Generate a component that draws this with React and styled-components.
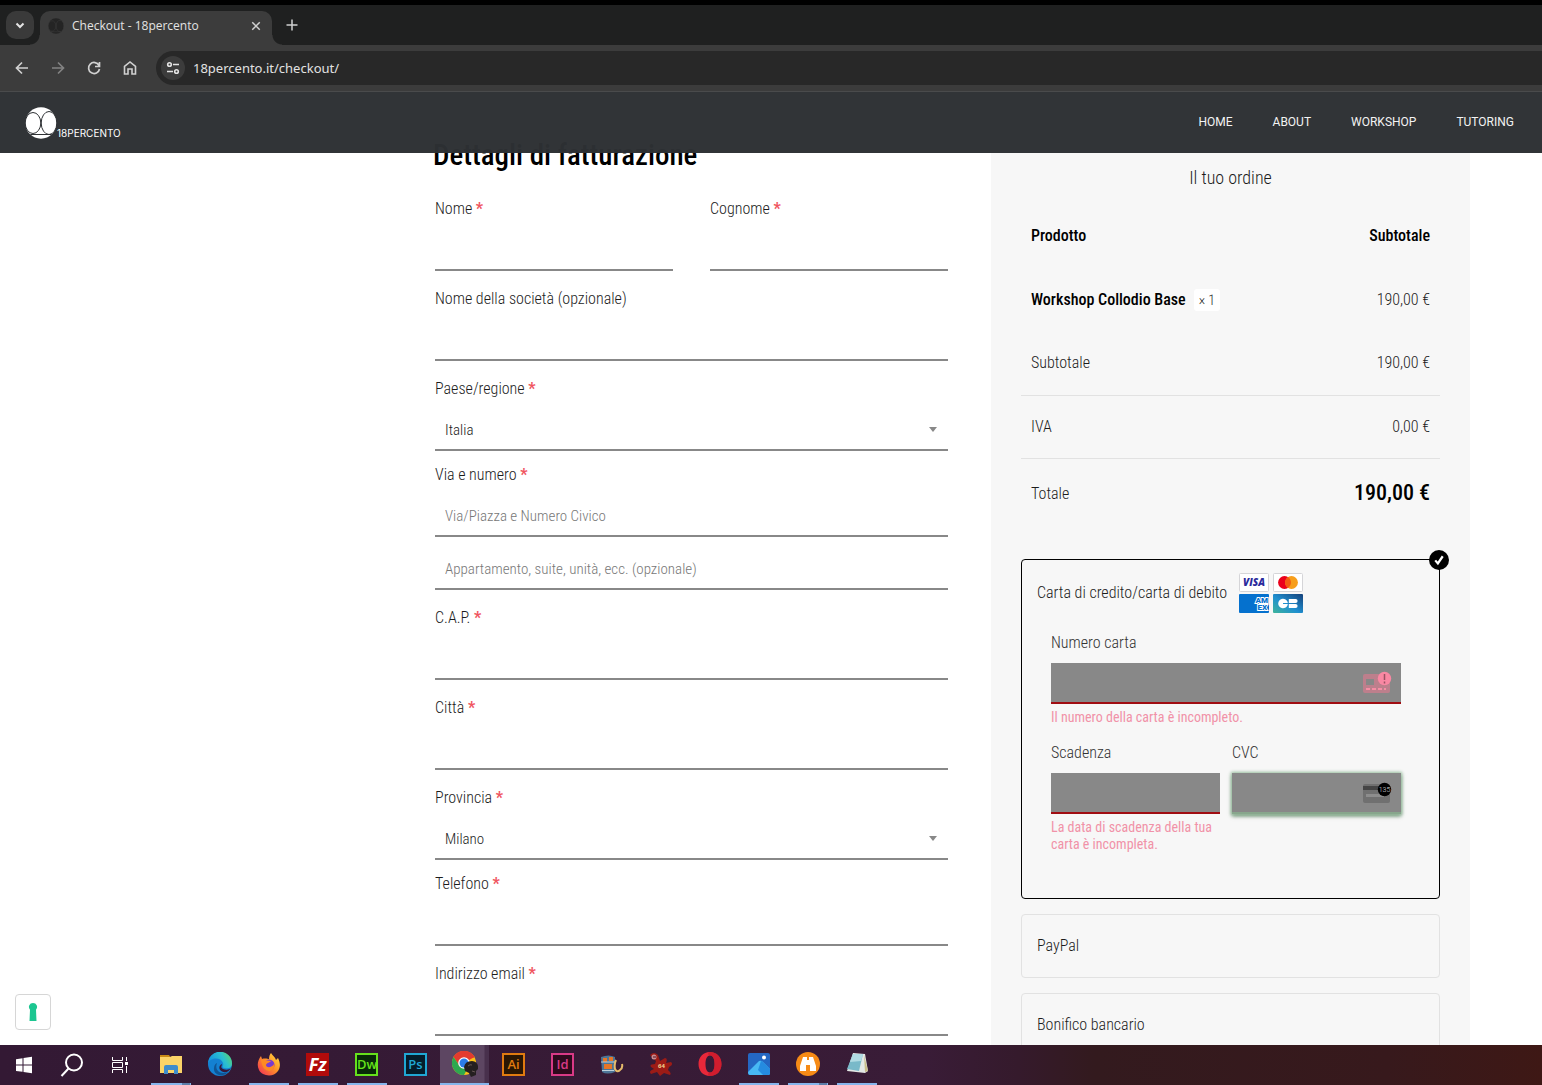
import React from "react";
import styled, { createGlobalStyle, css } from "styled-components";

const condensed = `"Roboto Condensed", "Liberation Sans Narrow", Roboto, sans-serif`;

const GlobalStyle = createGlobalStyle`
  *, *::before, *::after { box-sizing: border-box; }
  body { margin: 0; background: #fff; color: #1c1c1c; font: 300 16px/24px ${condensed}; }
  button, input, select { font: inherit; color: inherit; margin: 0; border-radius: 0; }
  button { border: 0; padding: 0; background: none; }
  svg { display: block; }
`;

const Screen = styled.div`
  display: flex;
  flex-direction: column;
  height: 100vh;
  overflow: hidden;
`;

/* ---------- browser ---------- */

const TabStrip = styled.div`
  display: flex;
  align-items: flex-start;
  flex: none;
  height: 45px;
  padding: 6px 6px 0;
  border-top: 5px solid #000;
  background: #1f2020;
  font-family: "Open Sans", sans-serif;
  font-weight: 400;
`;

const TabMenu = styled.button`
  display: grid;
  place-items: center;
  width: 28px;
  height: 28px;
  border-radius: 10px;
  background: #3a3a3a;
  color: #e3e3e3;
`;

const Tab = styled.div`
  position: relative;
  display: flex;
  align-items: center;
  gap: 8px;
  width: 232px;
  height: 34px;
  margin-left: 6px;
  padding: 0 10px 4px 8px;
  border-radius: 10px 10px 0 0;
  background: #3c3c3c;
  color: #e3e3e3;
  font-size: 12px;
  &::before, &::after {
    content: "";
    position: absolute;
    bottom: 0;
    width: 10px;
    height: 10px;
  }
  &::before { right: 100%; background: radial-gradient(circle at 0 0, transparent 9px, #3c3c3c 10px); }
  &::after { left: 100%; background: radial-gradient(circle at 100% 0, transparent 9px, #3c3c3c 10px); }
`;

const TabTitle = styled.span`
  flex: 1;
`;

const StripButton = styled.button`
  display: grid;
  place-items: center;
  width: ${(p) => p.$w || 28}px;
  height: 28px;
  color: ${(p) => (p.$dim ? "#828282" : "#d0d0d0")};
`;

const NewTab = styled(StripButton)`
  margin-left: 6px;
`;

const Toolbar = styled.div`
  display: flex;
  align-items: center;
  gap: 8px;
  flex: none;
  height: 47px;
  padding-left: 8px;
  border-bottom: 1px solid #4a4b4c;
  background: #3c3c3c;
`;

const Address = styled.label`
  display: flex;
  align-items: center;
  gap: 8px;
  flex: 1;
  height: 34px;
  margin-left: 4px;
  padding-left: 5px;
  border-radius: 17px 0 0 17px;
  background: #282828;
  font: 400 13px/20px "Noto Sans", sans-serif;
`;

const SiteInfo = styled.span`
  display: grid;
  place-items: center;
  width: 24px;
  height: 24px;
  border-radius: 50%;
  background: #3c3c3c;
  color: #e3e3e3;
`;

const AddressInput = styled.input`
  flex: 1;
  min-width: 0;
  padding: 0;
  border: 0;
  outline: 0;
  background: none;
  color: #e2e2e2;
`;

/* ---------- site ---------- */

const Viewport = styled.div`
  position: relative;
  flex: 1;
  min-height: 0;
  overflow: hidden;
`;

const SiteHeader = styled.header`
  position: absolute;
  inset: 0 0 auto;
  z-index: 2;
  display: flex;
  align-items: center;
  justify-content: space-between;
  height: 61px;
  padding: 0 28px 0 25px;
  background: rgba(45, 48, 51, 0.98);
  color: #fff;
`;

const Brand = styled.a`
  display: flex;
  align-items: flex-end;
  color: #fff;
  font: 400 10px/12px Inter, sans-serif;
  text-decoration: none;
`;

const Nav = styled.nav`
  display: flex;
  gap: 40px;
  padding-bottom: 2px;
`;

const NavLink = styled.a`
  color: #f3f3f3;
  font: 400 12px/20px Roboto, sans-serif;
  text-decoration: none;
`;

const Checkout = styled.main`
  display: grid;
  grid-template-columns: minmax(0, 513fr) minmax(0, 479fr);
  gap: 43px;
  padding: 0 72px 0 435px;
`;

const Billing = styled.form`
  padding-top: 46px;
`;

const Title = styled.h1`
  margin: 0 0 23px -2px;
  color: #000;
  font-size: 29px;
  font-weight: 500;
  line-height: 34px;
  padding-bottom: 2px;
`;

const Pair = styled.div`
  display: grid;
  grid-template-columns: 1fr 1fr;
  gap: 37px;
`;

const Field = styled.div`
  display: flex;
  flex-direction: column;
  margin-bottom: ${(p) => (p.$tight ? 12 : 16)}px;
`;

const Label = styled.label`
  height: 24px;
`;

const Star = styled.span`
  color: #f0565f;
  font-weight: 700;
`;

const control = css`
  width: 100%;
  height: 50px;
  padding: 10px 10px 0;
  border: 0;
  border-bottom: 2px solid #888;
  outline: 0;
  background: transparent;
  font-size: 15px;
`;

const TextInput = styled.input`
  ${control}
  & + & { margin-top: 3px; }
  &::placeholder { color: #777; opacity: 1; }
`;

const SelectWrap = styled.div`
  display: grid;
  align-items: center;
  > * { grid-area: 1 / 1; }
  > svg { justify-self: end; margin: 6px 11px 0 0; pointer-events: none; }
`;

const Select = styled.select`
  ${control}
  appearance: none;
`;

const Order = styled.aside`
  min-height: 953px;
  padding: 72px 30px 0;
  background: #f7f7f7;
`;

const OrderTitle = styled.h2`
  margin: 0 0 12px;
  font-size: 18px;
  font-weight: 300;
  line-height: 28px;
  text-align: center;
`;

const Table = styled.table`
  width: 100%;
  margin-bottom: 29px;
  border-collapse: collapse;
`;

const Row = styled.tr`
  height: ${(p) => (p.$tall ? 72 : p.$line ? 63 : 64)}px;
  border-bottom: ${(p) => (p.$line ? "1px solid #e2e2e2" : "0")};
`;

const Cell = styled.td`
  padding: 0 10px;
  text-align: ${(p) => (p.$end ? "right" : "left")};
  font-weight: 300;
`;

const HeadCell = styled(Cell).attrs({ as: "th" })`
  color: #000;
  font-weight: 500;
`;

const Product = styled.span`
  color: #000;
  font-weight: 500;
`;

const Quantity = styled.span`
  display: inline-block;
  margin-left: 8px;
  padding: 0 5px;
  border-radius: 3px;
  background: #fff;
  font-size: 14px;
  line-height: 22px;
`;

const Total = styled.strong`
  color: #000;
  font-size: 22px;
  font-weight: 500;
`;

const Methods = styled.div`
  display: flex;
  flex-direction: column;
  gap: 15px;
`;

const Method = styled.section`
  position: relative;
  padding: ${(p) => (p.$on ? "0 15px 45px" : "0 15px")};
  border: 1px solid ${(p) => (p.$on ? "#000" : "#e2e2e2")};
  border-radius: 4px;
`;

const MethodLabel = styled.label`
  display: flex;
  align-items: center;
  gap: 12px;
  height: ${(p) => (p.$on ? 66 : 62)}px;
`;

const Radio = styled.input`
  position: absolute;
  width: 20px;
  height: 20px;
  top: -10px;
  right: -10px;
  margin: 0;
  opacity: 0;
`;

const Tick = styled.span`
  position: absolute;
  top: -10px;
  right: -10px;
  display: grid;
  place-items: center;
  width: 20px;
  height: 20px;
  border-radius: 50%;
  background: #000;
`;

const Cards = styled.span`
  display: grid;
  grid-template-columns: 30px 30px;
  gap: 2px 4px;
`;

const CardForm = styled.div`
  display: grid;
  grid-template-columns: repeat(2, minmax(0, 1fr));
  gap: 15px 12px;
  padding: 5px 23px 0 14px;
`;

const CardField = styled.div`
  grid-column: ${(p) => (p.$wide ? "1 / -1" : "auto")};
`;

const CardLabel = styled.label`
  display: block;
  height: 32px;
  color: #333;
`;

const CardBox = styled.div`
  display: flex;
  align-items: center;
  height: 41px;
  padding-right: 9px;
  border-bottom: 2px solid ${(p) => (p.$focus ? "#87a68c" : "#a00d12")};
  background: #888;
  box-shadow: ${(p) => (p.$focus ? "0 0 3px 1px #9fc4a6, 0 2px 4px #567a5c" : "none")};
`;

const CardInput = styled.input`
  flex: 1;
  min-width: 0;
  height: 39px;
  border: 0;
  outline: 0;
  background: transparent;
`;

const Problem = styled.p`
  margin: 5px 0 0;
  color: #f192a8;
  font-size: 14px;
  font-weight: 400;
  line-height: 17px;
`;

const Privacy = styled.button`
  position: absolute;
  left: 15px;
  bottom: 15px;
  display: grid;
  place-items: center;
  width: 36px;
  height: 36px;
  border: 1px solid #d6d6d6;
  border-radius: 4px;
  background: #fff;
`;

/* ---------- taskbar ---------- */

const Taskbar = styled.div`
  display: flex;
  flex: none;
  height: 40px;
  background: linear-gradient(90deg, #331934, #391c37 60%, #351a2c 66%, #331a1e 71%, #37191c 90%, #3e1815);
`;

const SystemButton = styled.button`
  display: grid;
  place-items: center;
  width: 48px;
  height: 40px;
  &:nth-of-type(3) { margin-right: 2px; }
`;

const AppButton = styled.button`
  display: grid;
  place-items: center;
  width: 49px;
  height: 40px;
  border-bottom: 2px solid transparent;
  background:
    ${(p) => (p.$stack ? "linear-gradient(#5c7da8, #5c7da8) 36px 100% / 8px 2px no-repeat border-box," : "")}
    ${(p) => (p.$open ? "linear-gradient(#85b5ec, #85b5ec) 50% 100% / 40px 2px no-repeat border-box," : "")}
    ${(p) => (p.$active ? "linear-gradient(#85b5ec, #85b5ec) 50% 100% / 100% 2px no-repeat border-box, linear-gradient(90deg, #5d4662 44px, #48304c 45px) border-box" : "none")};
`;

const AppTile = styled.span`
  display: grid;
  place-items: center;
  width: 23px;
  height: 23px;
  border: 2px solid ${(p) => p.$tone};
  background: ${(p) => p.$fill};
  color: ${(p) => p.$tone};
  font: 600 13px/18px "Open Sans", sans-serif;
`;

const Fz = styled(AppTile)`
  border: 0;
  font: italic 700 18px/22px "Open Sans", sans-serif;
`;

/* ---------- drawings ---------- */

const Line = ({ d, size = 16, w = 2, children }) => (
  <svg width={size} height={size} viewBox="0 0 16 16" fill="none" stroke="currentColor" strokeWidth={w} aria-hidden="true">
    {d && <path d={d} />}
    {children}
  </svg>
);

const Mark = ({ size, fill, ink }) => (
  <svg width={size} height={size} viewBox="0 0 32 32" aria-hidden="true">
    <circle cx="16" cy="16" r="15.7" fill={fill} />
    <g fill="none" stroke={ink} strokeWidth="1">
      <ellipse cx="8" cy="16" rx="7.8" ry="10.5" />
      <ellipse cx="24" cy="16" rx="7.8" ry="11.5" />
      <path d="M5.500 27.500h21" />
    </g>
  </svg>
);

const Caret = () => (
  <svg width="8" height="5" aria-hidden="true"><path d="M0 0h8L4 5z" fill="#888" /></svg>
);

const Visa = () => (
  <svg width="30" height="19" viewBox="0 0 30 19" role="img" aria-label="Visa">
    <rect x=".5" y=".5" width="29" height="18" rx="1" fill="#fff" stroke="#d5d5d8" />
    <text x="15" y="13" textAnchor="middle" fontFamily="Open Sans, sans-serif" fontSize="10" fontWeight="800" fontStyle="italic" fill="#2a2a9c">VISA</text>
  </svg>
);
const Mastercard = () => (
  <svg width="30" height="19" viewBox="0 0 30 19" role="img" aria-label="Mastercard">
    <rect x=".5" y=".5" width="29" height="18" rx="1" fill="#fff" stroke="#d5d5d8" />
    <circle cx="11.5" cy="9.5" r="6.4" fill="#eb001b" />
    <circle cx="18.5" cy="9.5" r="6.4" fill="#f79e1b" />
    <path d="M15 4.1a6.4 6.4 0 0 1 0 10.8a6.4 6.4 0 0 1 0-10.8" fill="#f25c12" />
  </svg>
);
const Amex = () => (
  <svg width="30" height="19" viewBox="0 0 30 19" role="img" aria-label="American Express">
    <rect width="30" height="19" rx="1" fill="#0571ce" />
    <g fontFamily="Roboto, sans-serif" fontSize="8" fontWeight="900" fill="#0571ce" stroke="#fff" strokeWidth="1.8" paintOrder="stroke">
      <text x="16.5" y="8.5">AM</text>
      <text x="18.5" y="15.500">EX</text>
    </g>
  </svg>
);
const Cb = () => (
  <svg width="30" height="19" viewBox="0 0 30 19" role="img" aria-label="Carte Bancaire">
    <defs>
      <linearGradient id="cb" x1="0" y1="1" x2="1" y2="0">
        <stop offset="0" stopColor="#3fb59b" /><stop offset=".45" stopColor="#1f8fd0" /><stop offset="1" stopColor="#15417a" />
      </linearGradient>
    </defs>
    <rect width="30" height="19" rx="1" fill="url(#cb)" />
    <path d="M14.8 9H10V10H14.8A4.8 4.8 0 1 1 14.8 9M15.8 5h6.8a2 2 0 0 1 0 4h-6.800zM15.800 10h6.800a2 2 0 0 1 0 4h-6.800z" fill="#fff" />
  </svg>
);

const CardError = () => (
  <svg width="30" height="24" viewBox="0 0 30 24" aria-hidden="true">
    <rect x="1" y="3" width="27" height="19" rx="2" fill="#bd7f8c" />
    <path d="M4 8h8v6H4z" fill="#888" />
    <path d="M4 18h20" stroke="#f58ea5" strokeWidth="2" strokeDasharray="4 2" />
    <circle cx="22.500" cy="7.500" r="6.700" fill="#f988a3" />
    <path d="M22.500 3v6M22.500 10.500v2" stroke="#9a5062" strokeWidth="1.500" />
  </svg>
);
const CardCvc = () => (
  <svg width="30" height="24" viewBox="0 0 30 24" aria-hidden="true">
    <rect x="1" y="3" width="27" height="19" rx="2" fill="#707070" />
    <path d="M1 5h27v4H1z" fill="#454545" />
    <path d="M4 13h18v3H4z" fill="#8d8d8d" />
    <circle cx="22.500" cy="8.500" r="6.700" fill="#000" />
    <text x="22.500" y="11" textAnchor="middle" fontFamily="Roboto, sans-serif" fontSize="7" fill="#ddd">135</text>
  </svg>
);

const Glyph = ({ children }) => <svg width="24" height="24" viewBox="0 0 24 24" aria-hidden="true">{children}</svg>;

const Windows = () => <Glyph><path fill="#fff" d="M4 6.200l6.500-1v6.300H4zM11.500 5l8.500-1.200v7.700h-8.500zM4 12.500h6.500v6.300L4 17.900zM11.500 12.500H20v7.700L11.500 19z" /></Glyph>;
const Search = () => <Glyph><g fill="none" stroke="#fff" strokeWidth="2"><circle cx="14" cy="9.500" r="8" /><path d="M8.500 15.500L1.500 23" /></g></Glyph>;
const TaskView = () => <Glyph><g fill="none" stroke="#fff" strokeWidth="1"><path d="M4.500 4v3.500h10V4M4.500 20v-3.500h10V20M4.500 9.500h10v5h-10zM18.500 4v4M18.500 13v7" /><path d="M17 10.500h3" strokeWidth="3" /></g></Glyph>;
const Folder = () => <Glyph><path d="M1 3h9l2 3H1z" fill="#c98a16" /><path d="M1 5h10l2-1h10v17H1z" fill="#fbd368" /><path d="M5 22v-7q0-2 2-2h10q2 0 2 2v7h-4v-4H9v4z" fill="#3f8ccc" /></Glyph>;
const Edge = () => (
  <Glyph>
    <defs><linearGradient id="edge" x1="0" y1=".4" x2="1" y2="0"><stop offset="0" stopColor="#1594dc" /><stop offset=".55" stopColor="#2bbfd0" /><stop offset="1" stopColor="#68d752" /></linearGradient></defs>
    <circle cx="12" cy="12" r="12" fill="#1481d2" />
    <path d="M0 12A12 12 0 0 1 24 11.500C24 16 20 17 16 16C13 15 16 14 15 11C13 5 2 5 0 12" fill="url(#edge)" />
    <path d="M9 11C6 19 13 23 20 20C15 26 5 23 6 16C6 13 8 11.500 9 11" fill="#0f5696" />
    <path d="M14 12C14 14 12 15 15 17C18 18 21 18 23 16C21 20 17 21 14 19.500C11 18 10 14 14 12" fill="#35193a" />
  </Glyph>
);
const Firefox = () => (
  <Glyph>
    <defs><linearGradient id="fox" x1="1" y1="0" x2="0" y2="1"><stop offset="0" stopColor="#ffe344" /><stop offset=".45" stopColor="#ff9526" /><stop offset="1" stopColor="#f0265c" /></linearGradient></defs>
    <path d="M14 1C16 4 18 5 19 8L21 6C24 12 23 16 21 19C16 26 5 24 2 18C-.5 13 1 8 4 4L5 7C8 6 11 7 12 7C12 4 13 2 14 1" fill="url(#fox)" />
    <circle cx="12" cy="13" r="5.500" fill="#7a3bd0" />
    <path d="M4 8C8 7 11 9 14 9C13 11 10 10 9 13C9 16 15 16 17 12C18 17 15 19 12 19C8 19 5 15 4 8" fill="#ff8a22" />
  </Glyph>
);
const Chrome = () => (
  <svg width="26" height="26" viewBox="0 0 26 26" aria-hidden="true">
    <circle cx="12" cy="12" r="12" fill="#fbc116" />
    <path d="M12 12L1.600 6A12 12 0 0 1 22.400 6z" fill="#e33b2e" />
    <path d="M12 6.500h10.700A12 12 0 0 0 1.600 6L7 14z" fill="#e33b2e" />
    <path d="M1.600 6A12 12 0 0 0 12 24L17 15L7 14z" fill="#2da94f" />
    <circle cx="12" cy="12" r="5.800" fill="#fff" /><circle cx="12" cy="12" r="4.500" fill="#2b7de9" />
    <path d="M12 16Q13 10 20 10Q27 11 26 18L24 20L24 24L19 26L17 22L13 20z" fill="#241f20" />
    <path d="M16 15q2-2 4-1M20 20l3 1" stroke="#655" fill="none" />
  </svg>
);
const Barrel = () => <Glyph><path d="M1 5q8-3 14 0v15q-8 3-13 0z" fill="#4d7597" /><path d="M3 6h4v4H3zM9 5h4v4H9zM4 12h8v5H4z" fill="#e67628" /><path d="M1 10h14M2 18.500h12" stroke="#bdd1da" /><path d="M16 8q-2 4-1 9q2 4 5 1q3-2 2-6" fill="none" stroke="#e6bb6b" strokeWidth="2" /></Glyph>;
const Splat = () => <Glyph><path d="M1 3q4-4 8 0l2 6 5-3q3 0 1 5l5-1q3 3-2 5l-1 3q4 3 2 5l-6-2-4 3-3-4-6 2q-3-3 3-5l-3-2q-2-3 4-3l1-3z" fill="#9c1b16" /><circle cx="5" cy="5" r="2.500" fill="#c98d91" /><path d="M4 5h3" stroke="#512" /><text x="9" y="16" fontFamily="Open Sans, sans-serif" fontSize="6" fontWeight="700" fill="#f5d28c">64</text></Glyph>;
const Opera = () => <Glyph><path fillRule="evenodd" d="M12 0C19 0 23.500 5 23.500 12S19 24 12 24S.5 19 .5 12S5 0 12 0M12 3.500C8.500 3.500 7.500 8 7.500 12S8.500 20.500 12 20.500S16.500 16 16.500 12S15.500 3.500 12 3.500" fill="#e8283a" /><path d="M12 0C19 0 23.500 5 23.500 12S19 24 12 24C9 23 10 21 12 20.500C15.500 20.500 16.500 16 16.500 12S15.500 3.500 12 3.500C10 3 9 1 12 0" fill="#c01527" opacity=".6" /></Glyph>;
const Photos = () => <Glyph><rect x="1" y="1" width="22" height="22" rx="2" fill="#2467c3" /><path d="M1 20L12 9Q14 8 16 10L23 17V21Q23 23 21 23H3Q1 23 1 20" fill="#48b8f4" /><path d="M14 9q1 0 2 1l7 7v4q0 2-2 2h-5L11 18z" fill="#258be0" /><circle cx="17" cy="5.500" r="2" fill="#fff" /></Glyph>;
const Binoculars = () => <Glyph><circle cx="12" cy="12" r="12" fill="#f68b16" /><path d="M7 5h4v3h2V5h4l3 9v5h-6v-6h-4v6H4v-5z" fill="#fff" /></Glyph>;
const Notepad = () => <Glyph><path d="M8 1l12 1 3 17-3 2-18-2z" fill="#e3e8e6" /><path d="M8 2h10l-4 17-12-2z" fill="#79b9c9" /><path d="M8 2h10l-2 7-11 1z" fill="#b1dbe3" /><path d="M19 3l4 16-3 1z" fill="#c9bd8a" /></Glyph>;

/* ---------- page ---------- */

const Required = () => <Star aria-hidden="true">*</Star>;

const TextField = ({ id, label, required }) => (
  <Field>
    <Label htmlFor={id}>{label} {required && <Required />}</Label>
    <TextInput id={id} type="text" />
  </Field>
);

const SelectField = ({ id, label, value }) => (
  <Field $tight>
    <Label htmlFor={id}>{label} <Required /></Label>
    <SelectWrap>
      <Select id={id} defaultValue={value}><option>{value}</option></Select>
      <Caret />
    </SelectWrap>
  </Field>
);

const apps = [
  { name: "Esplora file", icon: <Folder />, open: true, stack: true },
  { name: "Edge", icon: <Edge /> },
  { name: "Firefox", icon: <Firefox />, open: true },
  { name: "FileZilla", icon: <Fz $tone="#fff" $fill="#b10b0b">Fz</Fz>, open: true },
  { name: "Dreamweaver", icon: <AppTile $tone="#66e11c" $fill="#082b08">Dw</AppTile>, open: true },
  { name: "Photoshop", icon: <AppTile $tone="#20a7d4" $fill="#041d2b">Ps</AppTile> },
  { name: "Chrome", icon: <Chrome />, active: true },
  { name: "Illustrator", icon: <AppTile $tone="#e07b10" $fill="#2b1703">Ai</AppTile> },
  { name: "InDesign", icon: <AppTile $tone="#d93a86" $fill="#2e0a1d">Id</AppTile> },
  { name: "Database", icon: <Barrel /> },
  { name: "Irfan", icon: <Splat /> },
  { name: "Opera", icon: <Opera /> },
  { name: "Foto", icon: <Photos />, open: true },
  { name: "Cerca", icon: <Binoculars />, open: true, stack: true },
  { name: "Blocco note", icon: <Notepad />, open: true },
];

export default function App() {
  return (
    <Screen>
      <GlobalStyle />
      <TabStrip>
        <TabMenu aria-label="Schede"><Line d="M4.500 6.500L8 10l3.500-3.500" /></TabMenu>
        <Tab>
          <Mark size={16} fill="#242424" ink="#3c3c3c" />
          <TabTitle>Checkout - 18percento</TabTitle>
          <StripButton $w={12} aria-label="Chiudi"><Line size={12} w={2} d="M3 3l10 10M13 3L3 13" /></StripButton>
        </Tab>
        <NewTab aria-label="Nuova scheda"><Line d="M8 2.500v11M2.500 8h11" w={1.5} /></NewTab>
      </TabStrip>
      <Toolbar>
        <StripButton aria-label="Indietro"><Line d="M14 8H3M8 2.500L2.500 8L8 13.500" w={1.7} /></StripButton>
        <StripButton $dim aria-label="Avanti"><Line d="M2 8h11M8 2.500L13.500 8L8 13.500" w={1.7} /></StripButton>
        <StripButton aria-label="Ricarica"><Line d="M13 5.500A5.500 5.500 0 1 0 13.500 9M13.500 2v4.500H9" w={1.7} /></StripButton>
        <StripButton aria-label="Home"><Line d="M2.500 14V6.500L8 2l5.500 4.500V14H10V9H6v5z" w={1.6} /></StripButton>
        <Address>
          <SiteInfo>
            <Line w={1.6}><circle cx="4.500" cy="4.500" r="1.800" /><path d="M8 4.500h6M2 11.500h6" /><circle cx="11.500" cy="11.500" r="1.800" /></Line>
          </SiteInfo>
          <AddressInput aria-label="Indirizzo" defaultValue="18percento.it/checkout/" />
        </Address>
      </Toolbar>

      <Viewport>
        <SiteHeader>
          <Brand href="#"><Mark size={32} fill="#fff" ink="#2e3134" />18PERCENTO</Brand>
          <Nav>
            {["HOME", "ABOUT", "WORKSHOP", "TUTORING"].map((n) => <NavLink key={n} href="#">{n}</NavLink>)}
          </Nav>
        </SiteHeader>

        <Checkout>
          <Billing>
            <Title>Dettagli di fatturazione</Title>
            <Pair>
              <TextField id="nome" label="Nome" required />
              <TextField id="cognome" label="Cognome" required />
            </Pair>
            <TextField id="societa" label="Nome della società (opzionale)" />
            <SelectField id="paese" label="Paese/regione" value="Italia" />
            <Field>
              <Label htmlFor="via">Via e numero <Required /></Label>
              <TextInput id="via" placeholder="Via/Piazza e Numero Civico" />
              <TextInput aria-label="Appartamento" placeholder="Appartamento, suite, unità, ecc. (opzionale)" />
            </Field>
            <TextField id="cap" label="C.A.P." required />
            <TextField id="citta" label="Città" required />
            <SelectField id="provincia" label="Provincia" value="Milano" />
            <TextField id="telefono" label="Telefono" required />
            <TextField id="email" label="Indirizzo email" required />
          </Billing>

          <Order>
            <OrderTitle>Il tuo ordine</OrderTitle>
            <Table>
              <thead>
                <Row><HeadCell>Prodotto</HeadCell><HeadCell $end>Subtotale</HeadCell></Row>
              </thead>
              <tbody>
                <Row><Cell><Product>Workshop Collodio Base</Product><Quantity>× 1</Quantity></Cell><Cell $end>190,00 €</Cell></Row>
                <Row $line><Cell>Subtotale</Cell><Cell $end>190,00 €</Cell></Row>
                <Row $line><Cell>IVA</Cell><Cell $end>0,00 €</Cell></Row>
                <Row $tall><Cell>Totale</Cell><Cell $end><Total>190,00 €</Total></Cell></Row>
              </tbody>
            </Table>
            <Methods>
              <Method $on>
                <MethodLabel $on>
                  <Radio type="radio" name="pay" defaultChecked />
                  Carta di credito/carta di debito
                  <Cards><Visa /><Mastercard /><Amex /><Cb /></Cards>
                </MethodLabel>
                <Tick>
                  <Line size={12} w={3}><path d="M3 8.500l3.500 4L13 3" stroke="#fff" /></Line>
                </Tick>
                <CardForm>
                  <CardField $wide>
                    <CardLabel htmlFor="numero">Numero carta</CardLabel>
                    <CardBox><CardInput id="numero" /><CardError /></CardBox>
                    <Problem>Il numero della carta è incompleto.</Problem>
                  </CardField>
                  <CardField>
                    <CardLabel htmlFor="scadenza">Scadenza</CardLabel>
                    <CardBox><CardInput id="scadenza" /></CardBox>
                    <Problem>La data di scadenza della tua carta è incompleta.</Problem>
                  </CardField>
                  <CardField>
                    <CardLabel htmlFor="cvc">CVC</CardLabel>
                    <CardBox $focus><CardInput id="cvc" /><CardCvc /></CardBox>
                  </CardField>
                </CardForm>
              </Method>
              <Method><MethodLabel><Radio type="radio" name="pay" />PayPal</MethodLabel></Method>
              <Method><MethodLabel><Radio type="radio" name="pay" />Bonifico bancario</MethodLabel></Method>
            </Methods>
          </Order>
        </Checkout>

        <Privacy aria-label="Preferenze privacy">
          <svg width="10" height="20" viewBox="0 0 10 20" aria-hidden="true"><path d="M5 1a4 4 0 0 1 3 6.700L8.500 19h-7L2 7.700A4 4 0 0 1 5 1" fill="#1cc691" /></svg>
        </Privacy>
      </Viewport>

      <Taskbar>
        <SystemButton aria-label="Start"><Windows /></SystemButton>
        <SystemButton aria-label="Cerca"><Search /></SystemButton>
        <SystemButton aria-label="Visualizzazione attività"><TaskView /></SystemButton>
        {apps.map((a) => (
          <AppButton key={a.name} aria-label={a.name} $open={a.open} $stack={a.stack} $active={a.active}>{a.icon}</AppButton>
        ))}
      </Taskbar>
    </Screen>
  );
}
